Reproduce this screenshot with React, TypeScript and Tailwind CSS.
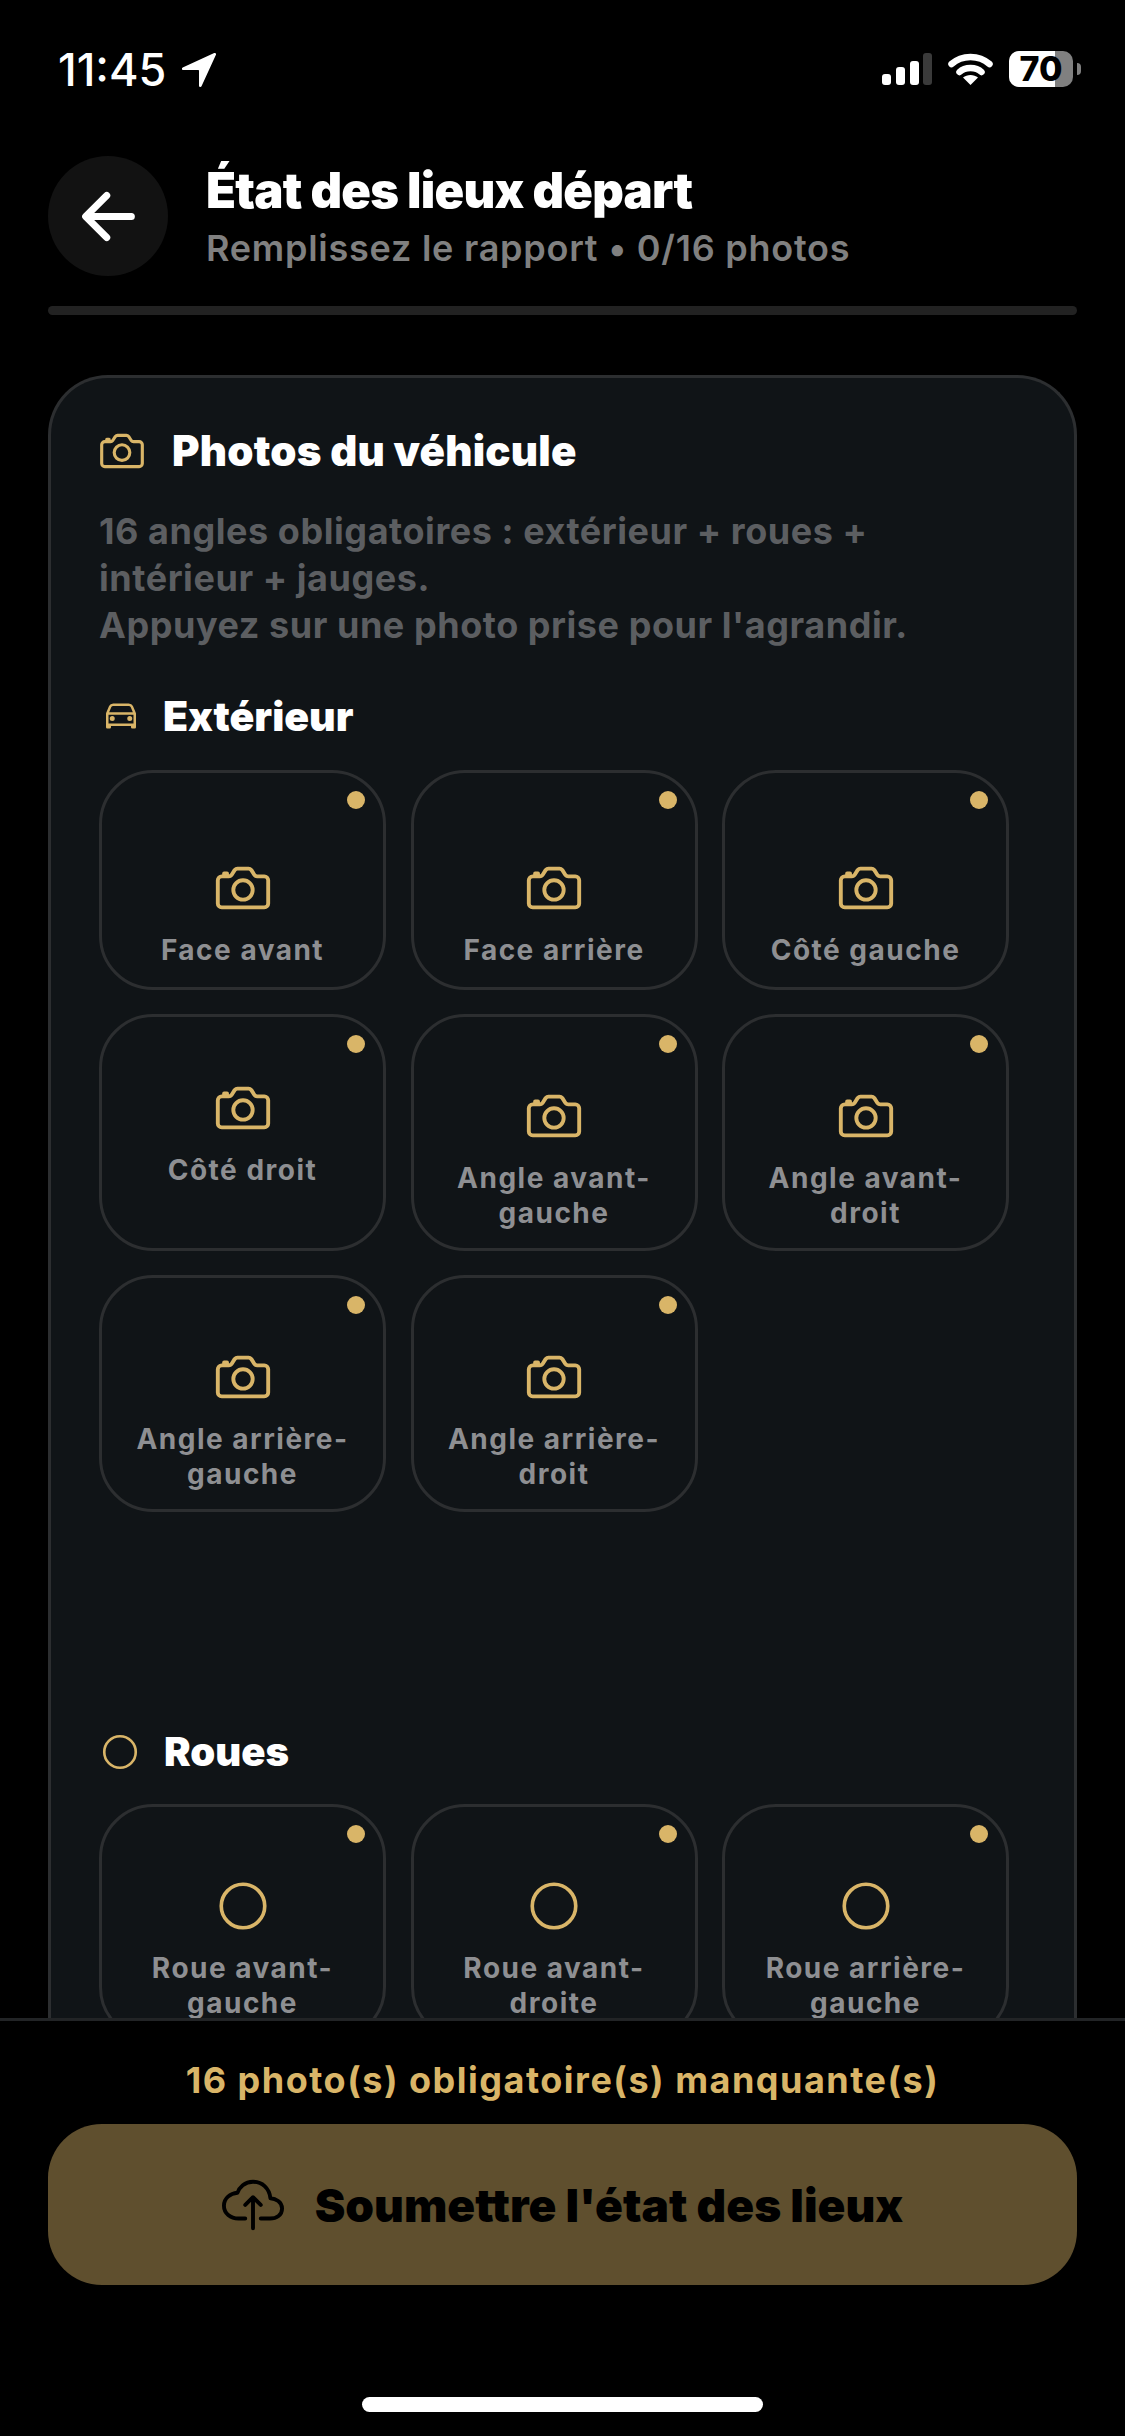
import { IoArrowBack, IoCameraOutline, IoCarOutline, IoCloudUploadOutline, IoEllipseOutline, IoNavigate } from 'react-icons/io5';

const exterior = [
  { label: 'Face avant', size: 'short' },
  { label: 'Face arrière', size: 'short' },
  { label: 'Côté gauche', size: 'short' },
  { label: 'Côté droit', size: 'single' },
  { label: 'Angle avant-\ngauche', size: 'tall' },
  { label: 'Angle avant-\ndroit', size: 'tall' },
  { label: 'Angle arrière-\ngauche', size: 'tall' },
  { label: 'Angle arrière-\ndroit', size: 'tall' },
];

const wheels = ['Roue avant-\ngauche', 'Roue avant-\ndroite', 'Roue arrière-\ngauche'];

function Tile({ label, size, round }: { label: string; size: string; round?: boolean }) {
  return (
    <div
      className={`relative flex flex-col items-center rounded-[54px] border-[3px] border-[#2c2e30] ${
        size === 'short' ? 'h-[220px] pt-[83px]' : size === 'single' ? 'h-[237px] pt-[59px]' : 'h-[237px] pt-[67px]'
      }`}
    >
      <div className="absolute top-[18px] right-[18px] h-[18px] w-[18px] rounded-full bg-[#d9b568]" />
      <div className="flex h-[64px] w-[64px] items-center justify-center">
        {round ? <IoEllipseOutline size={58} className="text-[#d9b568]" /> : <IoCameraOutline size={62} className="text-[#d9b568]" />}
      </div>
      <div className="mt-[12.5px] whitespace-pre-line text-center text-[28px] leading-[35px] font-bold tracking-[1.5px] text-[#8e8f92]">
        {label}
      </div>
    </div>
  );
}

export default function App() {
  return (
    <div className="flex h-[2436px] w-[1125px] flex-col overflow-hidden bg-black font-['Inter',sans-serif] text-white">
      {/* Status bar */}
      <div className="flex h-[136px] shrink-0 items-start justify-between pt-[46px] pr-[44px] pl-[58px]">
        <div className="flex items-center gap-[12px]">
          <span className="text-[45px] leading-[48px] font-medium">11:45</span>
          <IoNavigate size={42} />
        </div>
        <div className="flex items-center pt-[5px]">
          <svg width="50" height="32" viewBox="0 0 50 32">
            <rect x="0" y="21" width="9" height="11" rx="3" fill="#fff" />
            <rect x="14" y="14" width="9" height="18" rx="3" fill="#fff" />
            <rect x="28" y="8" width="9" height="24" rx="3" fill="#fff" />
            <rect x="41" y="0" width="9" height="32" rx="3" fill="#3a3a3a" />
          </svg>
          <svg className="ml-[16px]" width="45" height="32" viewBox="0 0 45 32" fill="none" stroke="#fff" strokeWidth="6.5" strokeLinecap="round">
            <path d="M3.5 11C14 1.5 31 1.5 41.5 11" />
            <path d="M11.5 19C17 13.5 28 13.5 33.5 19" />
            <path d="M22.5 32L15 24.5C19 21 26 21 30 24.5Z" fill="#fff" stroke="none" />
          </svg>
          <div className="relative ml-[16px] flex h-[36px] w-[64px] items-center justify-center rounded-[10px] bg-[#808080]">
            <div className="absolute inset-y-0 left-0 w-[46px] rounded-l-[10px] bg-white" />
            <span className="relative text-[34px] leading-none font-extrabold text-black">70</span>
          </div>
          <div className="ml-[4px] h-[12px] w-[4px] rounded-r-full bg-[#808080]" />
        </div>
      </div>

      {/* Header */}
      <div className="flex h-[170px] shrink-0 items-start gap-[38px] px-[48px] pt-[20px]">
        <div className="flex h-[120px] w-[120px] items-center justify-center rounded-full bg-[#121212]">
          <IoArrowBack size={75} />
        </div>
        <div className="flex flex-col pt-[7px]">
          <span className="text-[49px] leading-[56px] font-black tracking-[-0.8px]">État des lieux départ</span>
          <span className="mt-[7px] text-[36px] leading-[44px] font-semibold tracking-[0.75px] text-[#808080]">
            Remplissez le rapport • 0/16 photos
          </span>
        </div>
      </div>

      {/* Progress */}
      <div className="mx-[48px] h-[9px] shrink-0 rounded-full bg-[#222222]" />

      {/* Scrolling content */}
      <div className="min-h-0 flex-1 overflow-hidden px-[48px] pt-[60px]">
        <div className="rounded-t-[60px] border-[3px] border-b-0 border-[#2c2e30] bg-[#101417] px-[48px] pt-[48px] pb-[60px]">
          <div className="flex items-center gap-[25px]">
            <IoCameraOutline size={50} className="-ml-[2px] text-[#d9b568]" />
            <span className="text-[42px] leading-[50px] font-black tracking-[0.2px]">Photos du véhicule</span>
          </div>
          <p className="mt-[32px] text-[36px] leading-[47px] font-bold tracking-[0.55px] text-[#5c5e61]">
            16 angles obligatoires : extérieur + roues +
            <br />
            intérieur + jauges.
            <br />
            Appuyez sur une photo prise pour l'agrandir.
          </p>
          <div className="mt-[42px] flex items-center gap-[22px]">
            <IoCarOutline size={40} className="ml-[2px] text-[#d9b568]" />
            <span className="text-[41px] leading-[50px] font-black">Extérieur</span>
          </div>
          <div className="mt-[29px] grid grid-cols-[287px_287px_287px] gap-x-[24.5px] gap-y-[24px]">
            {exterior.map((item) => (
              <Tile key={item.label} label={item.label} size={item.size} />
            ))}
          </div>
          <div className="mt-[215px] flex items-center gap-[23px]">
            <IoEllipseOutline size={42} className="text-[#d9b568]" />
            <span className="text-[40px] leading-[50px] font-black">Roues</span>
          </div>
          <div className="mt-[27px] grid grid-cols-[287px_287px_287px] gap-x-[24.5px] gap-y-[24px]">
            {wheels.map((label) => (
              <Tile key={label} label={label} size="tall" round />
            ))}
          </div>
        </div>
      </div>

      {/* Footer */}
      <div className="flex h-[418px] shrink-0 flex-col border-t-[3px] border-[#222426] bg-black px-[48px] pt-[37px]">
        <div className="text-center text-[36px] leading-[44px] font-bold tracking-[1.5px] text-[#d9b568]">
          16 photo(s) obligatoire(s) manquante(s)
        </div>
        <div className="mt-[22px] flex h-[161px] items-center justify-center gap-[31px] rounded-[54px] bg-[#5f4f2e] text-black">
          <IoCloudUploadOutline size={62} />
          <span className="text-[46px] leading-[52px] font-black">Soumettre l'état des lieux</span>
        </div>
        <div className="mx-auto mt-[112px] h-[15px] w-[401px] rounded-full bg-white" />
      </div>
    </div>
  );
}
